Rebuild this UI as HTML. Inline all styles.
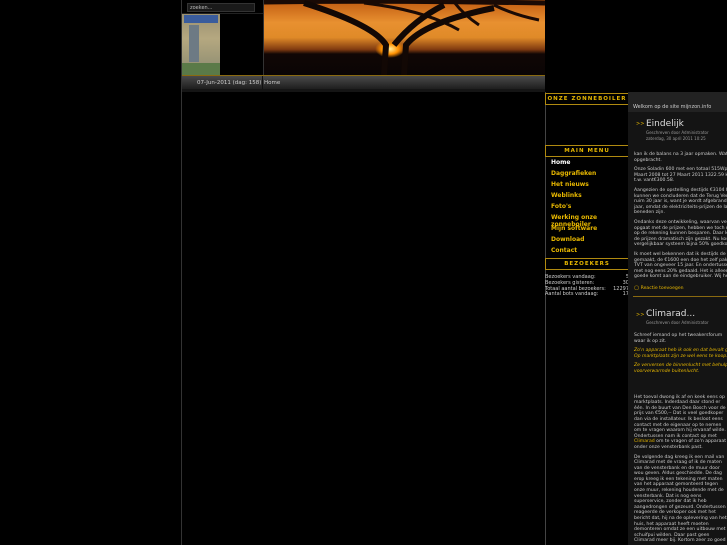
<!DOCTYPE html>
<html style="overflow:hidden"><head><meta charset="utf-8"><style>
html,body{margin:0;width:727px;height:545px;overflow:hidden}
body{background:#000;position:relative;font-family:"DejaVu Sans","Liberation Sans",sans-serif;color:#ccc}
.a{position:absolute}
.sb{font-size:5.5px;color:#ccc}
.box{position:absolute;left:545px;width:82px;height:10px;border:1px solid #b08a10;color:#e8b800;font-size:5.5px;font-weight:bold;letter-spacing:1px;text-align:center;line-height:10px;white-space:nowrap}
.mi{position:absolute;left:551px;font-size:6px;font-weight:bold;color:#e8b800;line-height:6.5px}
.mt{font-size:4.6px;line-height:5.6px;color:#ccc;margin:0 0 4px}
.y{color:#e8b800;font-style:italic}
.clip{position:absolute;left:628px;top:92px;width:99px;height:453px;overflow:hidden;background:#141414}
</style></head><body>
<div class="a" style="left:181px;top:0;width:1px;height:545px;background:#333"></div>
<div class="a" style="left:187px;top:3px;width:68px;height:9px;background:#1a1a1a;border:1px solid #333;font-size:5px;color:#bbb;line-height:8px;padding-left:2px;box-sizing:border-box">zoeken...</div>
<div class="a" style="left:182px;top:13px;width:81px;height:1px;background:#222"></div>
<div class="a" style="left:182px;top:14px;width:38px;height:61px;background:linear-gradient(#9a9070,#b5a880 40%,#8a8a70)"></div>
<div class="a" style="left:184px;top:15px;width:34px;height:8px;background:#3a5c9c"></div>
<div class="a" style="left:189px;top:25px;width:10px;height:37px;background:#6d7a84"></div>
<div class="a" style="left:182px;top:63px;width:38px;height:12px;background:#5a7a48"></div>
<div class="a" style="left:263px;top:0;width:1px;height:75px;background:#333"></div>
<div class="a" style="left:264px;top:0;width:281px;height:75px;background:linear-gradient(#c05a10 0,#e89030 30%,#e08a28 50%,#803a10 66%,#100605 72%,#0a0505 100%)"></div>
<div class="a" style="left:375px;top:40px;width:30px;height:18px;border-radius:50%;background:radial-gradient(#fff0a0,#ff9000 40%,transparent 70%)"></div>
<svg class="a" style="left:264px;top:0" width="281" height="75"><path d="M0 2 Q100 0 281 3" stroke="#1a0a05" stroke-width="5" fill="none"/><path d="M100 3 Q160 10 195 30 M190 2 Q200 15 215 25 M230 5 Q250 15 275 20" stroke="#1a0a05" stroke-width="3" fill="none"/><path d="M120 75 L122 45 Q110 25 40 3 M130 45 Q150 20 180 5 M140 75 L142 45 Q160 22 230 8" stroke="#120805" stroke-width="6" fill="none"/></svg>
<div class="a" style="left:182px;top:75px;width:363px;height:1px;background:#8a6a10"></div>
<div class="a" style="left:182px;top:76px;width:363px;height:13px;background:linear-gradient(#4a4a4a,#1e1e1e)"></div>
<div class="a" style="left:262px;top:76px;width:1px;height:13px;background:#111"></div>
<div class="a sb" style="left:197px;top:80px">07-Jun-2011 (dag: 158)</div>
<div class="a sb" style="left:264px;top:80px">Home</div>
<div class="a" style="left:182px;top:89px;width:363px;height:3px;background:#151515"></div>
<div class="a" style="left:545px;top:92px;width:1px;height:453px;background:#444"></div>
<div class="box" style="top:93px">ONZE ZONNEBOILER</div>
<div class="box" style="top:145px">MAIN MENU</div>
<div class="mi" style="top:160px;color:#fff">Home</div>
<div class="mi" style="top:171px">Daggrafieken</div>
<div class="mi" style="top:182px">Het nieuws</div>
<div class="mi" style="top:193px">Weblinks</div>
<div class="mi" style="top:204px">Foto's</div>
<div class="mi" style="top:215px">Werking onze<br>zonneboiler</div>
<div class="mi" style="top:226px">Mijn software</div>
<div class="mi" style="top:237px">Download</div>
<div class="mi" style="top:248px">Contact</div>
<div class="box" style="top:258px">BEZOEKERS</div>
<div class="a" style="left:545px;top:275px;width:84px;font-size:5px;line-height:5.8px;color:#ccc">
<div>Bezoekers vandaag:<span style="float:right">5</span></div><div>Bezoekers gisteren:<span style="float:right">30</span></div><div>Totaal aantal bezoekers:<span style="float:right">12297</span></div><div>Aantal bots vandaag:<span style="float:right">17</span></div></div>
<div class="clip">
<div class="a" style="left:0;top:0;width:99px;height:20px;background:#222"></div>
<div class="a" style="left:5px;top:12px;font-size:5px;color:#ccc;white-space:nowrap">Welkom op de site mijnzon.info</div>
<div class="a" style="left:8px;top:29px;font-size:5px;color:#e8b800">&gt;&gt;</div>
<div class="a" style="left:18px;top:27px;font-size:9px;color:#ddd;white-space:nowrap">Eindelijk</div>
<div class="a" style="left:18px;top:38px;font-size:4px;color:#999;line-height:6px;white-space:nowrap">Geschreven door Administrator<br>zaterdag, 30 april 2011 10:25</div>
<div class="a" style="left:6px;top:60px;width:135px">
<p class="mt">kan ik de balans na 3 jaar opmaken. Wat heeft het opgebracht.</p>
<p class="mt">Onze Soladin 600 met een totaal 515Wp heeft van 5 Maart 2008 tot 27 Maart 2011 1322.59 kWh opgebracht, t.w. vant€300.58.</p>
<p class="mt">Aangezien de opstelling destijds €3104 heeft gekost, kunnen we concluderen dat de Terug Verdien Tijd (TVT) ruim 30 jaar is, want je wordt afgebrand, meer dan 30 jaar, omdat de elektriciteits-prijzen de laatste 2 jaar naar beneden zijn.</p>
<p class="mt">Ondanks deze ontwikkeling, waarvan velen zich nog opgaat met de prijzen, hebben we toch ruim 30 procent op de rekening kunnen besparen. Daar komt nog bij dat de prijzen dramatisch zijn gezakt. Nu kost een vergelijkbaar systeem bijna 50% goedkoper.</p>
<p class="mt">Ik moet wel bekennen dat ik destijds de fout heb gemaakt, de €1600 een doe het zelf pakket is met een TVT van ongeveer 15 jaar. En ondertussen zijn de prijzen met nog eens 20% gedaald. Het is alleen jammer dat het goede komt aan de eindgebruiker. Wij hebben de panelen.</p>
<p class="mt" style="color:#e8b800;margin-top:6px">&#9711; Reactie toevoegen</p></div>
<div class="a" style="left:5px;top:204px;width:94px;height:1px;background:#8a6a10"></div>
<div class="a" style="left:8px;top:220px;font-size:5px;color:#e8b800">&gt;&gt;</div>
<div class="a" style="left:18px;top:217px;font-size:9px;color:#ddd;white-space:nowrap">Climarad...</div>
<div class="a" style="left:18px;top:228px;font-size:4px;color:#999;white-space:nowrap">Geschreven door Administrator</div>
<div class="a" style="left:6px;top:241px;width:96px">
<p class="mt">Schreef iemand op het tweakersforum waar ik op zit.</p>
<p class="mt y" style="width:110px">Zo'n apparaat heb ik ook en dat bevalt goed. Op marktplaats zijn ze wel eens te koop.</p>
<p class="mt y" style="width:125px">Ze verversen de binnenlucht met behulp van voorverwarmde buitenlucht.</p>
<p class="mt" style="margin-top:20px">Het toeval dwong ik af en keek eens op marktplaats. Inderdaad daar stond er één. In de buurt van Den Bosch voor de prijs van €500,-- Dat is veel goedkoper dan via de installateur. Ik besloot eens contact met de eigenaar op te nemen om te vragen waarom hij ervanaf wilde. Ondertussen nam ik contact op met <span style="color:#e8b800">Climarad</span> om te vragen of zo'n apparaat onder onze vensterbank past.</p>
<p class="mt">De volgende dag kreeg ik een mail van Climarad met de vraag of ik de maten van de vensterbank en de muur door wou geven. Aldus geschiedde. De dag erop kreeg ik een tekening met maten van het apparaat gemonteerd tegen onze muur, rekening houdende met de vensterbank. Dat is nog eens superservice, zonder dat ik heb aangedrongen of gezeurd. Ondertussen reageerde de verkoper ook met het bericht dat, hij na de oplevering van het huis, het apparaat heeft moeten demonteren omdat ze een uitbouw met schuifpui wilden. Daar past geen Climarad meer bij. Kortom zeer zo goed</p></div>
</div>
</body></html>
